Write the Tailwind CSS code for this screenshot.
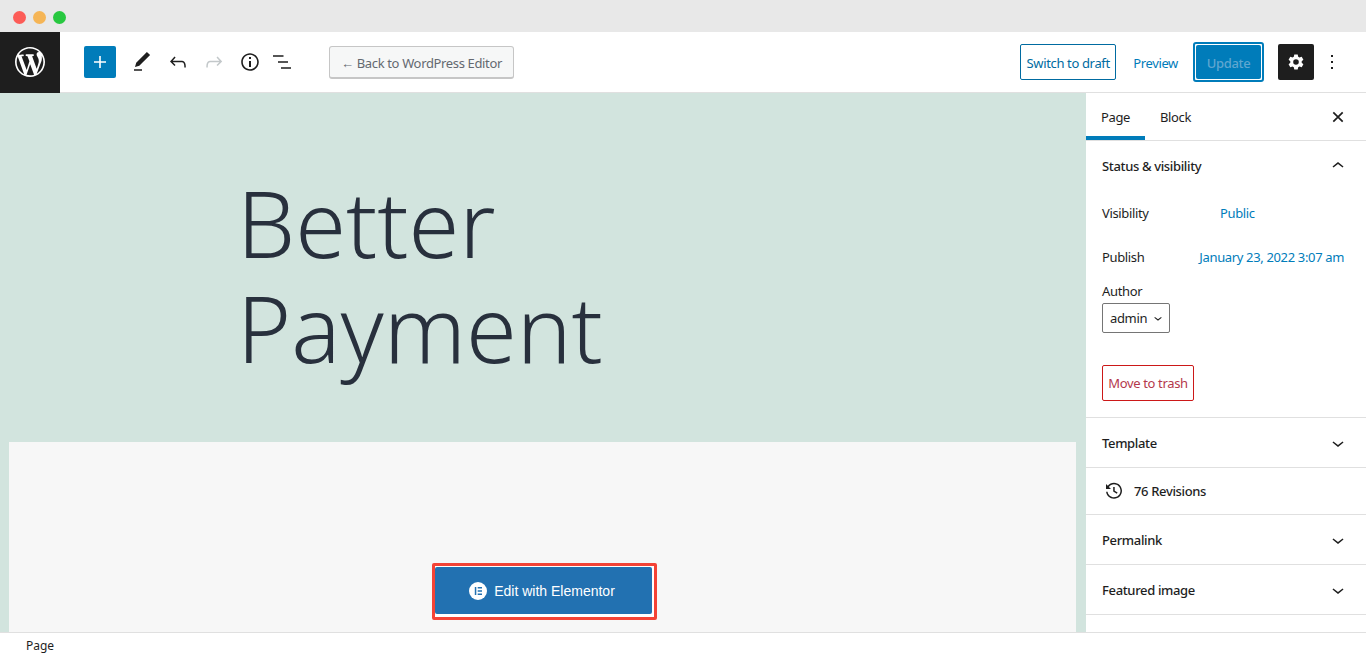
<!DOCTYPE html>
<html lang="en">

<head>
    <meta charset="UTF-8">
    <meta name="viewport" content="width=device-width, initial-scale=1.0">
    <title>Edit Page</title>
    <script src="https://cdn.jsdelivr.net/npm/@tailwindcss/browser@4"></script>
</head>

<body class="bg-white overflow-hidden font-['Noto_Sans',sans-serif] text-[13px] tracking-[-0.35px] text-[#1e1e1e]">

    <div class="h-[657px] w-[1366px] flex flex-col overflow-hidden">

        <!-- Window chrome -->
        <div class="h-[32px] shrink-0 bg-[#e8e8e8] flex items-center gap-[7px] pl-[13px] pt-[2px]">
            <span class="w-[13px] h-[13px] rounded-full bg-[#fc5c57]"></span>
            <span class="w-[13px] h-[13px] rounded-full bg-[#f5b556]"></span>
            <span class="w-[13px] h-[13px] rounded-full bg-[#28c840]"></span>
        </div>

        <!-- Toolbar -->
        <div class="h-[61px] shrink-0 flex items-center border-b border-[#e0e0e0]">
            <div class="w-[60px] h-[61px] bg-[#1e1e1e] flex items-center justify-center">
                <svg width="30" height="30" viewBox="0 0 20 20" fill="#fff">
                    <path d="M20 10c0-5.52-4.5-10-10-10S0 4.48 0 10c0 5.510 4.5 10 10 10s10-4.490 10-10zM7.780 15.370L4.370 6.220c.55-.02 1.170-.08 1.170-.08.5-.06.44-1.130-.06-1.110 0 0-1.450.11-2.370.11-.18 0-.37 0-.58-.01C4.120 2.690 6.890 1.070 10 1.070c2.330 0 4.450.87 6.050 2.340-.68-.11-1.650.39-1.650 1.580 0 .74.45 1.360.9 2.100.35.61.55 1.360.55 2.460 0 1.490-1.400 5-1.400 5l-3.030-8.370c.54-.02.82-.17.82-.17.5-.05.44-1.250-.06-1.220 0 0-1.440.12-2.380.12-.87 0-2.330-.12-2.330-.12-.5-.03-.56 1.200-.06 1.220l.92.08 1.260 3.410zM17.410 10c.24-.64.74-1.870.43-4.250.7 1.290 1.050 2.710 1.050 4.250 0 3.290-1.730 6.240-4.400 7.780.97-2.590 1.940-5.200 2.920-7.780zM6.100 18.090C3.120 16.650 1.110 13.530 1.110 10c0-1.300.23-2.480.72-3.590zm4.030-6.630l2.580 6.980c-.86.29-1.750.45-2.710.45-.79 0-1.570-.11-2.290-.33z" />
                </svg>
            </div>

            <div class="flex items-center ml-[24px]">
                <button class="w-[32px] h-[32px] rounded-[2px] bg-[#007cba] flex items-center justify-center">
                    <svg width="24" height="24" viewBox="0 0 24 24" fill="#fff"><path d="M18 11.200h-5.200V6h-1.600v5.200H6v1.600h5.200V18h1.600v-5.200H18z" /></svg>
                </button>
                <svg class="ml-[14px]" width="24" height="24" viewBox="0 0 24 24" fill="#1e1e1e"><path d="M20.100 5.100L16.900 2 6.200 12.700 5 17l4.300-1.200L20.100 5.100zM4 20.800h8v-1.500H4v1.500z" /></svg>
                <svg class="ml-[12px]" width="24" height="24" viewBox="0 0 24 24" fill="#1e1e1e"><path d="M18.300 11.700c-.6-.6-1.400-.9-2.300-.9H6.700l2.900-3.300-1.100-1-4.500 5L8.500 16l1-1-2.700-2.700H16c.5 0 .9.200 1.300.5 1 1 1 3.400 1 4.500v.3h1.500v-.2c0-1.500 0-4.300-1.500-5.700z" /></svg>
                <svg class="ml-[12px]" width="24" height="24" viewBox="0 0 24 24" fill="#c3c8ca"><path d="M15.600 6.500l-1.100 1 2.900 3.300H8c-.9 0-1.700.3-2.300.9-1.400 1.500-1.400 4.200-1.400 5.600v.2h1.500v-.3c0-1.100 0-3.500 1-4.500.3-.3.700-.5 1.300-.5h9.200L14.500 15l1.100 1.100 4.600-4.600-4.600-5z" /></svg>
                <svg class="ml-[12px]" width="24" height="24" viewBox="0 0 24 24" fill="#1e1e1e"><path d="M12 3.200c-4.800 0-8.800 3.900-8.800 8.800 0 4.800 3.900 8.800 8.800 8.800 4.800 0 8.800-3.900 8.800-8.800 0-4.800-4-8.800-8.800-8.800zm0 16c-4 0-7.200-3.300-7.200-7.200C4.800 8 8 4.800 12 4.800s7.200 3.300 7.200 7.200c0 4-3.200 7.200-7.200 7.200zM11 17h2v-6h-2v6zm0-8h2V7h-2v2z" /></svg>
                <svg class="ml-[11px]" width="24" height="24" viewBox="0 0 24 24" fill="#1e1e1e"><path d="M0 5.200h10.500v1.500H0zM5 11.200h10v1.500H5zM8 17.300h10v1.500H8z" /></svg>
            </div>

            <button class="ml-[32px] w-[185px] h-[33px] pt-[4px] rounded-[3px] border border-[#c6c6c6] border-b-2 bg-[#f6f7f7] text-[#646970] text-[13px] text-center">← Back to WordPress Editor</button>

            <div class="ml-auto flex items-center">
                <button class="w-[96px] h-[36px] pt-[4px] rounded-[2px] border border-[#006ba1] text-[#006ba1] text-[13px]">Switch to draft</button>
                <span class="ml-[17px] mt-[4px] text-[#007cba] text-[13px]">Preview</span>
                <div class="ml-[15px] w-[71px] h-[40px] rounded-[3px] border-2 border-[#007cba] p-[1px] bg-white">
                    <div class="h-full rounded-[2px] bg-[#007cba] flex items-center justify-center pt-[3px] text-[13px] text-[#5fa6d0] font-medium">Update</div>
                </div>
                <div class="ml-[14px] w-[36px] h-[36px] rounded-[2px] bg-[#1e1e1e] flex items-center justify-center">
                    <svg width="24" height="24" viewBox="0 0 24 24" fill="#fff"><path fill-rule="evenodd" d="M10.300 4.500h3.400l.5 2.300 1.300.7 2.200-.7 1.700 3-1.700 1.500v1.400l1.700 1.500-1.700 3-2.200-.7-1.300.7-.5 2.300h-3.400l-.5-2.300-1.300-.7-2.200.7-1.700-3 1.700-1.500v-1.400l-1.700-1.500 1.700-3 2.200.7 1.300-.7zM12 9.200a2.800 2.800 0 1 0 0 5.600 2.800 2.800 0 0 0 0-5.600z" /></svg>
                </div>
                <svg class="ml-[6px] mr-[22px]" width="24" height="24" viewBox="0 0 24 24" fill="#1e1e1e"><path d="M13 19h-2v-2h2v2zm0-6h-2v-2h2v2zm0-6h-2V5h2v2z" /></svg>
            </div>
        </div>

        <!-- Main -->
        <div class="h-[539px] shrink-0 flex overflow-hidden">

            <!-- Editor canvas -->
            <div class="w-[1086px] shrink-0 bg-[#d2e4de] flex flex-col">
                <div class="h-[349px] shrink-0 pl-[237px] pt-[77px]">
                    <h1 class="font-['Noto_Sans',sans-serif] font-light text-[92px] tracking-normal leading-[105px] text-[#28303d]">Better<br>Payment</h1>
                </div>
                <div class="flex-1 ml-[9px] mr-[10px] bg-[#f7f7f7] flex justify-center pt-[121px]">
                    <div class="ml-[4px] w-[225px] h-[57px] border-[3px] border-[#f44336] rounded-[2px] bg-white pt-[1px] pr-[2px]">
                        <button class="w-full h-[47px] pr-[3px] rounded-[2px] bg-[#2271b1] flex items-center justify-center gap-[7px] text-white text-[14px] tracking-normal font-['Liberation_Sans',sans-serif]">
                            <svg width="18" height="18" viewBox="0 0 18 18">
                                <circle cx="9" cy="9" r="9" fill="#fff" />
                                <path d="M5.800 5h1.500v8H5.800zM8.700 5H13v1.500H8.700zM8.700 8.200H13v1.500H8.700zM8.700 11.500H13V13H8.700z" fill="#2271b1" />
                            </svg>
                            <span class="mt-[2px]">Edit with Elementor</span>
                        </button>
                    </div>
                </div>
            </div>

            <!-- Sidebar -->
            <aside class="w-[280px] shrink-0 bg-white flex flex-col">
                <div class="h-[48px] shrink-0 flex items-center border-b border-[#e0e0e0] relative">
                    <div class="w-[59px] h-full flex items-center justify-center border-b-[4px] border-[#007cba] pt-[6px]">Page</div>
                    <div class="ml-[15px] mt-[2px]">Block</div>
                    <svg class="ml-auto mr-[16px]" width="24" height="24" viewBox="0 0 24 24" fill="none" stroke="#1e1e1e" stroke-width="1.700"><path d="M7.300 7.300l9.400 9.400M16.700 7.300l-9.400 9.400" /></svg>
                </div>

                <!-- Status & visibility -->
                <div class="h-[277px] shrink-0 border-b border-[#e0e0e0] px-[16px] relative">
                    <div class="h-[50px] flex items-center justify-between font-medium">
                        <span class="mt-[2px]">Status &amp; visibility</span>
                        <svg width="24" height="24" viewBox="0 0 24 24" fill="#1e1e1e"><path d="M6.500 12.400L12 8l5.500 4.400-.9 1.200L12 10l-4.500 3.600-1-1.200z" /></svg>
                    </div>
                    <div class="flex h-[24px] mt-[11px] items-center">
                        <span class="w-[118px]">Visibility</span>
                        <span class="text-[#007cba]">Public</span>
                    </div>
                    <div class="flex h-[24px] mt-[20px] items-center justify-between">
                        <span>Publish</span>
                        <span class="text-[#007cba] mr-[6px]">January 23, 2022 3:07 am</span>
                    </div>
                    <div class="mt-[12px] leading-[18px]">Author</div>
                    <div class="mt-[3px] w-[68px] h-[30px] rounded-[2px] border border-[#757575] flex items-center pl-[7px]">
                        <span class="mt-[2px]">admin</span>
                        <svg class="ml-[3px]" width="16" height="16" viewBox="0 0 24 24" fill="#1e1e1e"><path d="M17.500 11.600L12 16l-5.500-4.400.9-1.200L12 14l4.600-3.600z" /></svg>
                    </div>
                    <button class="block mt-[32px] w-[92px] h-[36px] pt-[2px] rounded-[2px] border border-[#cc1818] text-[#b4384c] text-[13px]">Move to trash</button>
                </div>

                <div class="h-[50px] shrink-0 border-b border-[#e0e0e0] px-[16px] flex items-center justify-between font-medium">
                    <span class="mt-[2px]">Template</span>
                    <svg width="24" height="24" viewBox="0 0 24 24" fill="#1e1e1e"><path d="M17.500 11.600L12 16l-5.500-4.400.9-1.200L12 14l4.600-3.600z" /></svg>
                </div>
                <div class="h-[47px] shrink-0 border-b border-[#e0e0e0] pl-[16px] flex items-center font-medium">
                    <svg width="24" height="24" viewBox="0 0 24 24" fill="#1e1e1e"><path d="M4.100 12.800c.4 4 3.800 7 7.900 7 4.400 0 8-3.600 8-8s-3.600-8-8-8c-2.500 0-4.700 1.200-6.200 3L4 5v5h5L6.900 7.900C8.100 6.300 9.900 5.300 12 5.300c3.600 0 6.500 2.900 6.500 6.500s-2.900 6.500-6.500 6.500c-3.300 0-6-2.400-6.400-5.500H4.100zM11.200 8v4.600l3.600 2.200.8-1.200-2.900-1.800V8z" /></svg>
                    <span class="ml-[8px] mt-[2px]">76 Revisions</span>
                </div>
                <div class="h-[50px] shrink-0 border-b border-[#e0e0e0] px-[16px] flex items-center justify-between font-medium">
                    <span class="mt-[2px]">Permalink</span>
                    <svg width="24" height="24" viewBox="0 0 24 24" fill="#1e1e1e"><path d="M17.500 11.600L12 16l-5.500-4.400.9-1.200L12 14l4.600-3.600z" /></svg>
                </div>
                <div class="h-[50px] shrink-0 border-b border-[#e0e0e0] px-[16px] flex items-center justify-between font-medium">
                    <span class="mt-[2px]">Featured image</span>
                    <svg width="24" height="24" viewBox="0 0 24 24" fill="#1e1e1e"><path d="M17.500 11.600L12 16l-5.500-4.400.9-1.200L12 14l4.600-3.600z" /></svg>
                </div>
            </aside>
        </div>

        <!-- Footer breadcrumb -->
        <div class="flex-1 border-t border-[#e0e0e0] bg-white flex items-center pl-[26px] pt-[2px] text-[12px] tracking-normal">Page</div>
    </div>

</body>

</html>
